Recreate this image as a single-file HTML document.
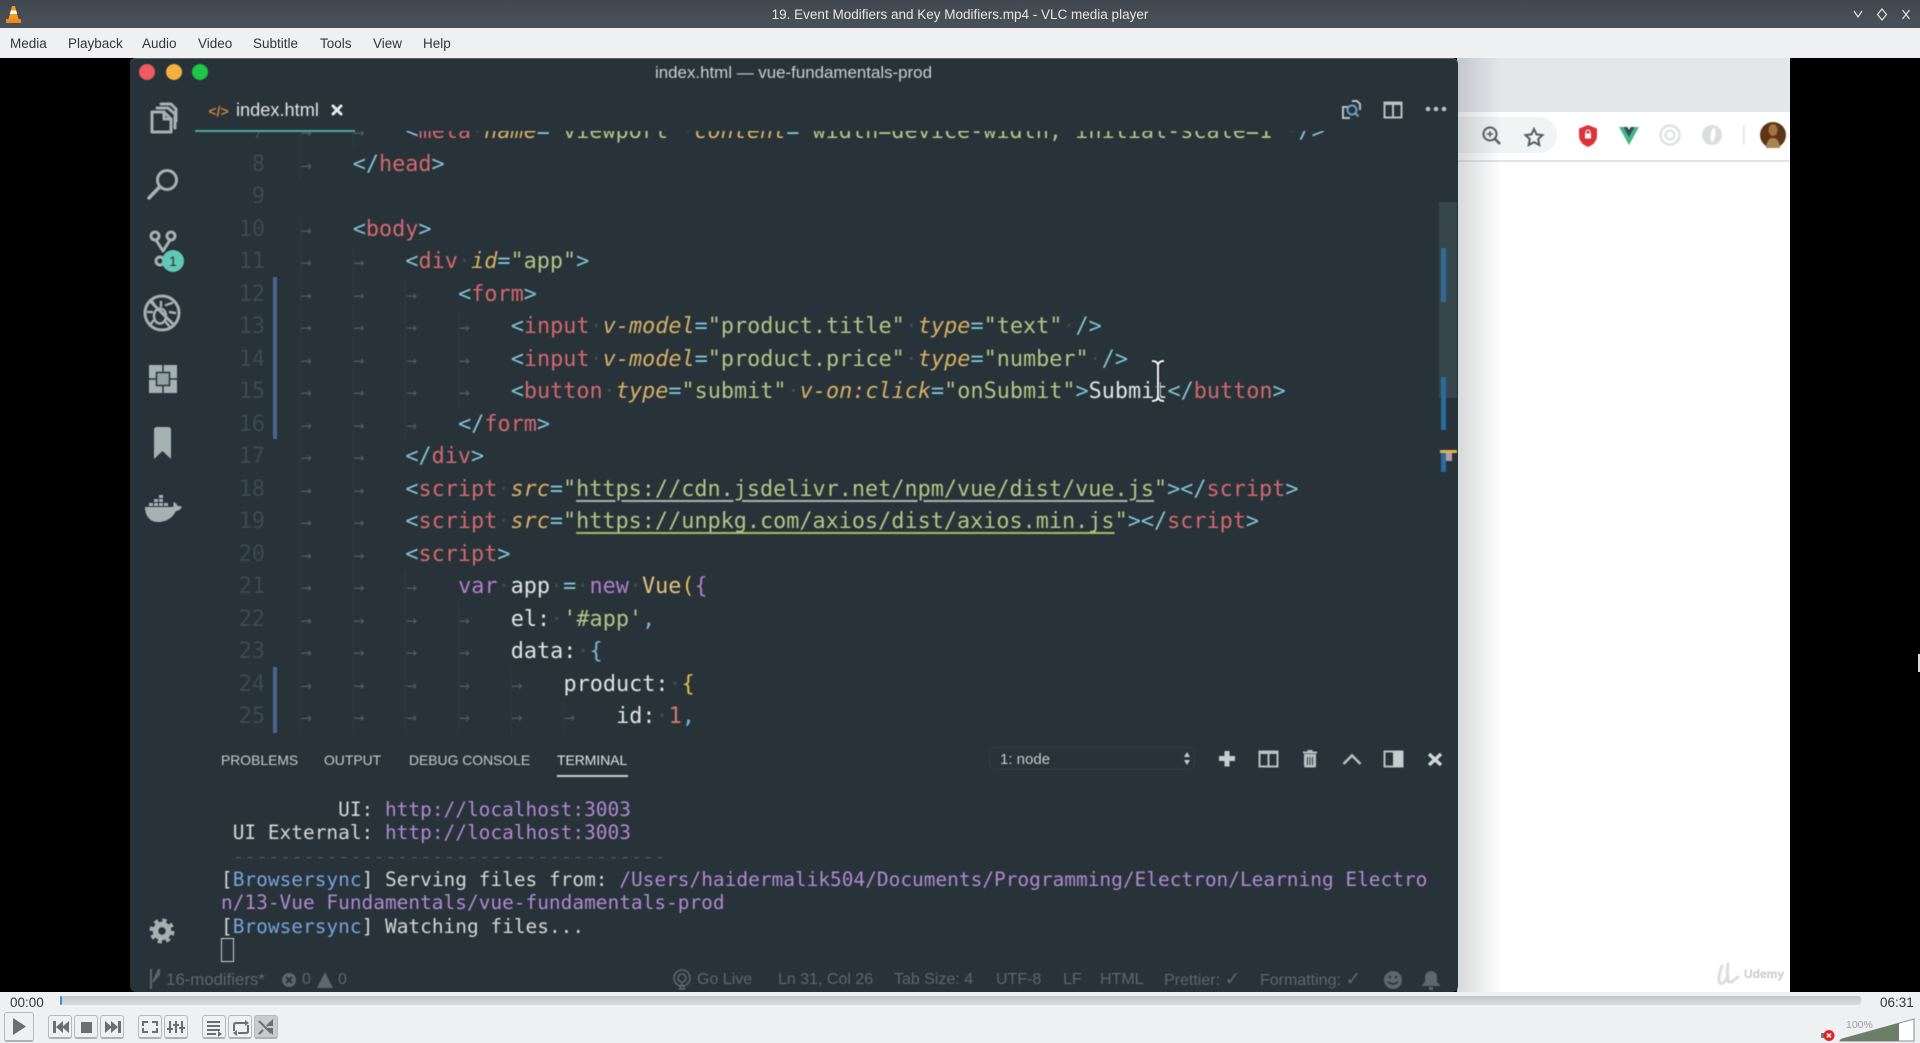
<!DOCTYPE html>
<html lang="en"><head><meta charset="utf-8"><title>19. Event Modifiers and Key Modifiers.mp4 - VLC media player</title>
<style>
html,body{margin:0;padding:0;width:1920px;height:1043px;overflow:hidden;background:#eff0f1;font-family:"Liberation Sans",sans-serif}
.a{position:absolute}
#title{left:0;top:0;width:1920px;height:28px;background:linear-gradient(#41474f,#4a5159);color:#e4e6e8;font-size:13.5px;line-height:29px;text-align:center}
#menu{left:0;top:28px;width:1920px;height:30px;background:#eff0f1;color:#31363b;font-size:13.5px}
#menu span{position:absolute;top:1px;line-height:30px}
#video{left:0;top:58px;width:1920px;height:934px;background:#000;overflow:hidden}
#browser{left:1457px;top:0;width:333px;height:934px;background:#fff}
#vs{left:130px;top:0;width:1328px;height:934px;background:#273339;border-radius:6px;filter:blur(.35px);box-shadow:inset 0 1px #56636a}
.code{position:absolute;left:300px;height:32.5px;line-height:32.5px;white-space:pre;font-family:"DejaVu Sans Mono","Liberation Mono",monospace;font-size:21.82px;color:#dfe4e6}
.n{position:absolute;left:217px;width:48px;height:32.5px;line-height:32.5px;text-align:right;font-family:"DejaVu Sans Mono",monospace;font-size:21.82px;color:#3c4a51}
i{font-style:normal}
.code i.t{display:inline-block;width:51.7px;border-left:1px solid #2f3c43;height:32.5px;vertical-align:top;font-size:18px;line-height:33px;color:#4f5c62;text-indent:0}
.b{color:#83c3d2}.r{color:#d4686f}.y{font-style:italic;color:#d8b066}.s{color:#b3c586}.d{color:#3f4c53}.w{color:#e2e6e8}
.p{color:#b07fc9}.v{color:#e3c27c}.q{color:#d97b68}.c{color:#e0c050}.l{color:#7fb2d8}
.u1{text-decoration:underline;text-decoration-color:#a8b5ad;text-underline-offset:4px;text-decoration-thickness:2px}
.u2{text-decoration:underline;text-decoration-color:#a3bf5e;text-underline-offset:4px;text-decoration-thickness:2px}
.term{position:absolute;left:221px;margin-top:.5px;height:23.4px;line-height:23.4px;white-space:pre;font-family:"DejaVu Sans Mono",monospace;font-size:19.47px;color:#d3d8da}
.term b{font-weight:normal;color:#b08ad0}.term em{font-style:normal;color:#7aa2dd}
.pt{position:absolute;font-size:13.9px;line-height:20px;color:#c4cdd0}
.st{position:absolute;font-size:16px;line-height:20px;color:#5b686e;white-space:pre}
.st i{font-size:19px}
.btn{position:absolute;box-sizing:border-box;border:1px solid #b7b9ba;border-bottom:2px solid #aeb0b1;border-radius:3px;background:#eff0f1}
</style></head><body>

<div class="a" id="title">19. Event Modifiers and Key Modifiers.mp4 - VLC media player</div>
<div class="a" id="menu">
<span style="left:10px">Media</span><span style="left:68px">Playback</span><span style="left:142px">Audio</span><span style="left:198px">Video</span><span style="left:253px">Subtitle</span><span style="left:320px">Tools</span><span style="left:373px">View</span><span style="left:423px">Help</span>
</div>

<div class="a" id="video">
 <div class="a" style="left:1918px;top:596px;width:2px;height:18px;background:#ddd"></div>
 <div class="a" id="browser">
  <div class="a" style="left:0;top:0;width:333px;height:54px;background:#e4e7ea"></div>
  <div class="a" style="left:0;top:54px;width:333px;height:48px;background:#fff"></div>
  <div class="a" style="left:0;top:59px;width:100px;height:36px;background:#f1f3f4;border-radius:0 18px 18px 0"></div>
  <div class="a" style="left:0;top:102px;width:333px;height:2px;background:#e3e4e6"></div>
  <div class="a" style="left:0;top:0;width:45px;height:934px;background:linear-gradient(90deg,rgba(120,125,130,.3),rgba(255,255,255,0))"></div>
  <div class="a" style="left:259px;top:905px;width:68px;font-size:12px;font-weight:bold;color:#d6d8da;text-align:right;line-height:22px;text-shadow:0 0 1px #bbb">Udemy</div>
 </div>
 <div class="a" id="vs"></div>
</div>

<!-- code area -->
<div class="a" style="left:0;top:0;width:1920px;height:1043px;filter:blur(.45px)">
<div class="a" style="left:1439px;top:202px;width:18px;height:196px;background:#37464d"></div>
<div class="a" style="left:1441px;top:248px;width:5px;height:54px;background:#2f6b97"></div>
<div class="a" style="left:1441px;top:377px;width:5px;height:53px;background:#2a6c9c"></div>
<div class="a" style="left:1441px;top:450px;width:5px;height:22px;background:#2a6c9c"></div>
<div class="a" style="left:1440px;top:450px;width:17px;height:3px;background:#d9b54a"></div>
<div class="a" style="left:1446px;top:453px;width:6px;height:8px;background:#b99aa8"></div>

<div class="a" style="left:273px;top:277px;width:4px;height:162px;background:#4d648f"></div>
<div class="a" style="left:273px;top:667px;width:4px;height:66px;background:#4d648f"></div>

<div class="a" style="left:0;top:131px;width:1439px;height:604px;overflow:hidden">
 <div style="position:absolute;left:0;top:-130px;width:1439px;height:900px">
<div class="n" style="top:115.25px">7</div>
<div class="code" style="top:115.25px"><i class="t">→</i><i class="t">→</i><span class="b">&lt;</span><span class="r">meta</span><span class="d">·</span><span class="y">name</span><span class="b">=</span><span class="s">"viewport"</span><span class="d">·</span><span class="y">content</span><span class="b">=</span><span class="s">"width=device-width, initial-scale=1"</span><span class="d">·</span><span class="b">/&gt;</span></div>
<div class="n" style="top:147.75px">8</div>
<div class="code" style="top:147.75px"><i class="t">→</i><span class="b">&lt;/</span><span class="r">head</span><span class="b">&gt;</span></div>
<div class="n" style="top:180.25px">9</div>
<div class="n" style="top:212.75px">10</div>
<div class="code" style="top:212.75px"><i class="t">→</i><span class="b">&lt;</span><span class="r">body</span><span class="b">&gt;</span></div>
<div class="n" style="top:245.25px">11</div>
<div class="code" style="top:245.25px"><i class="t">→</i><i class="t">→</i><span class="b">&lt;</span><span class="r">div</span><span class="d">·</span><span class="y">id</span><span class="b">=</span><span class="s">"app"</span><span class="b">&gt;</span></div>
<div class="n" style="top:277.75px">12</div>
<div class="code" style="top:277.75px"><i class="t">→</i><i class="t">→</i><i class="t">→</i><span class="b">&lt;</span><span class="r">form</span><span class="b">&gt;</span></div>
<div class="n" style="top:310.25px">13</div>
<div class="code" style="top:310.25px"><i class="t">→</i><i class="t">→</i><i class="t">→</i><i class="t">→</i><span class="b">&lt;</span><span class="r">input</span><span class="d">·</span><span class="y">v-model</span><span class="b">=</span><span class="s">"product.title"</span><span class="d">·</span><span class="y">type</span><span class="b">=</span><span class="s">"text"</span><span class="d">·</span><span class="b">/&gt;</span></div>
<div class="n" style="top:342.75px">14</div>
<div class="code" style="top:342.75px"><i class="t">→</i><i class="t">→</i><i class="t">→</i><i class="t">→</i><span class="b">&lt;</span><span class="r">input</span><span class="d">·</span><span class="y">v-model</span><span class="b">=</span><span class="s">"product.price"</span><span class="d">·</span><span class="y">type</span><span class="b">=</span><span class="s">"number"</span><span class="d">·</span><span class="b">/&gt;</span></div>
<div class="n" style="top:375.25px">15</div>
<div class="code" style="top:375.25px"><i class="t">→</i><i class="t">→</i><i class="t">→</i><i class="t">→</i><span class="b">&lt;</span><span class="r">button</span><span class="d">·</span><span class="y">type</span><span class="b">=</span><span class="s">"submit"</span><span class="d">·</span><span class="y">v-on:click</span><span class="b">=</span><span class="s">"onSubmit"</span><span class="b">&gt;</span><span class="w">Submit</span><span class="b">&lt;/</span><span class="r">button</span><span class="b">&gt;</span></div>
<div class="n" style="top:407.75px">16</div>
<div class="code" style="top:407.75px"><i class="t">→</i><i class="t">→</i><i class="t">→</i><span class="b">&lt;/</span><span class="r">form</span><span class="b">&gt;</span></div>
<div class="n" style="top:440.25px">17</div>
<div class="code" style="top:440.25px"><i class="t">→</i><i class="t">→</i><span class="b">&lt;/</span><span class="r">div</span><span class="b">&gt;</span></div>
<div class="n" style="top:472.75px">18</div>
<div class="code" style="top:472.75px"><i class="t">→</i><i class="t">→</i><span class="b">&lt;</span><span class="r">script</span><span class="d">·</span><span class="y">src</span><span class="b">=</span><span class="s">"<span class="u1">https://cdn.jsdelivr.net/npm/vue/dist/vue.js</span>"</span><span class="b">&gt;&lt;/</span><span class="r">script</span><span class="b">&gt;</span></div>
<div class="n" style="top:505.25px">19</div>
<div class="code" style="top:505.25px"><i class="t">→</i><i class="t">→</i><span class="b">&lt;</span><span class="r">script</span><span class="d">·</span><span class="y">src</span><span class="b">=</span><span class="s">"<span class="u2">https://unpkg.com/axios/dist/axios.min.js</span>"</span><span class="b">&gt;&lt;/</span><span class="r">script</span><span class="b">&gt;</span></div>
<div class="n" style="top:537.75px">20</div>
<div class="code" style="top:537.75px"><i class="t">→</i><i class="t">→</i><span class="b">&lt;</span><span class="r">script</span><span class="b">&gt;</span></div>
<div class="n" style="top:570.25px">21</div>
<div class="code" style="top:570.25px"><i class="t">→</i><i class="t">→</i><i class="t">→</i><span class="p">var</span><span class="d">·</span>app<span class="d">·</span><span class="b">=</span><span class="d">·</span><span class="p">new</span><span class="d">·</span><span class="v">Vue</span><span class="c">(</span><span class="p">{</span></div>
<div class="n" style="top:602.75px">22</div>
<div class="code" style="top:602.75px"><i class="t">→</i><i class="t">→</i><i class="t">→</i><i class="t">→</i>el:<span class="d">·</span><span class="s">'#app'</span><span class="l">,</span></div>
<div class="n" style="top:635.25px">23</div>
<div class="code" style="top:635.25px"><i class="t">→</i><i class="t">→</i><i class="t">→</i><i class="t">→</i>data:<span class="d">·</span><span class="l">{</span></div>
<div class="n" style="top:667.75px">24</div>
<div class="code" style="top:667.75px"><i class="t">→</i><i class="t">→</i><i class="t">→</i><i class="t">→</i><i class="t">→</i>product:<span class="d">·</span><span class="c">{</span></div>
<div class="n" style="top:700.25px">25</div>
<div class="code" style="top:700.25px"><i class="t">→</i><i class="t">→</i><i class="t">→</i><i class="t">→</i><i class="t">→</i><i class="t">→</i>id:<span class="d">·</span><span class="q">1</span><span class="l">,</span></div>
 </div>
</div>

<div class="a" style="left:530px;top:63px;width:527px;text-align:center;font-size:16.9px;line-height:20px;color:#c9d0d3">index.html — vue-fundamentals-prod</div>
<div class="a" style="left:236px;top:100px;font-size:18.2px;line-height:20px;color:#dfe4e6">index.html</div>
<div class="a" style="left:195px;top:130px;width:160px;height:2px;background:#4da99b"></div>

<div class="pt" style="top:750px;left:221px">PROBLEMS</div>
<div class="pt" style="top:750px;left:324px">OUTPUT</div>
<div class="pt" style="top:750px;left:409px">DEBUG CONSOLE</div>
<div class="pt" style="top:750px;left:557px;color:#e2e6e8">TERMINAL</div>
<div class="a" style="left:557px;top:775px;width:71px;height:2px;background:#c8d0d3"></div>
<div class="a" style="left:989px;top:747px;width:206px;height:23px;box-sizing:border-box;border:1px solid #303e45;border-radius:6px"></div>
<div class="a" style="left:1000px;top:750px;font-size:15px;line-height:20px;color:#c4cdd0">1: node</div>

<div class="term" style="top:797.3px">          UI: <b>http://localhost:3003</b></div>
<div class="term" style="top:820.7px"> UI External: <b>http://localhost:3003</b></div>
<div class="term" style="top:844.1px;color:#44535a"> -------------------------------------</div>
<div class="term" style="top:867.5px">[<em>Browsersync</em>] Serving files from: <b>/Users/haidermalik504/Documents/Programming/Electron/Learning Electro</b></div>
<div class="term" style="top:890.9px"><b>n/13-Vue Fundamentals/vue-fundamentals-prod</b></div>
<div class="term" style="top:914.3px">[<em>Browsersync</em>] Watching files...</div>
<div class="a" style="left:221px;top:938px;width:11px;height:22px;border:1.5px solid #c9d0d3"></div>

<div class="st" style="top:970px;left:166px;font-size:16.8px">16-modifiers*</div>
<div class="st" style="top:970px;left:302px">0</div>
<div class="st" style="top:970px;left:338px">0</div>
<div class="st" style="top:970px;left:697px">Go Live</div>
<div class="st" style="top:970px;left:778px">Ln 31, Col 26</div>
<div class="st" style="top:970px;left:894px">Tab Size: 4</div>
<div class="st" style="top:970px;left:996px">UTF-8</div>
<div class="st" style="top:970px;left:1063px">LF</div>
<div class="st" style="top:970px;left:1100px">HTML</div>
<div class="st" style="top:970px;left:1164px">Prettier: <i>✓</i></div>
<div class="st" style="top:970px;left:1260px">Formatting: <i>✓</i></div>
</div>

<!-- icons overlay -->
<svg class="a" style="left:0;top:0;filter:blur(.4px)" width="1920" height="1043" viewBox="0 0 1920 1043">
 <g fill="none" stroke="#a5b2b4" stroke-width="3" stroke-linejoin="round" stroke-linecap="round">
  <path d="M152 112h12l7 7v13h-19z"/><path d="M164 112v7h7"/>
  <path d="M157 108h11l7 6v14"/><path d="M161 104h10l5 5v12"/>
  <circle cx="167" cy="180" r="9.5" stroke-width="3"/><path d="M159.5 187L149 198" stroke-width="3.6"/>
  <circle cx="155" cy="236" r="4"/><circle cx="171" cy="236" r="4"/>
  <path d="M156 240l7 11M170 240l-7 11"/><circle cx="160" cy="261" r="4"/>
  <circle cx="162" cy="313" r="17" stroke-width="3"/>
  <path d="M150 301l24 24" stroke-width="3"/>
  <ellipse cx="160" cy="316" rx="6" ry="7.5" stroke-width="2.5"/>
  <path d="M166 305l6 -2M170 312l5 1M165 321l4 5M153 321l-3 4M152 312h-4M154 304l-3 -4M161 302v4" stroke-width="2.5"/>
 </g>
 <circle cx="173" cy="261" r="11" fill="#62c8b6"/>
 <text x="173" y="266" font-family="Liberation Sans" font-size="14" text-anchor="middle" fill="#24343a">1</text>
 <rect x="149" y="365" width="28" height="28" fill="#a5b2b4"/>
 <rect x="156.5" y="372.500" width="13" height="13" fill="#94a2a4" stroke="#27333a" stroke-width="1.500"/>
 <path d="M163 365v7M170 379h7M163 386v7M149 379h7" stroke="#27333a" stroke-width="1.500"/>
 <path d="M154 430q0-3 3-3h11q3 0 3 3v29l-8.500-8-8.500 8z" fill="#a5b2b4"/>
 <path d="M145 507h28c1-2 0-4 1-5 2 1 3 3 4 4 1 0 3 0 4 1-2 3-4 4-6 4-4 8-11 11-18 11-8 0-13-6-13-15z" fill="#a5b2b4"/>
 <path d="M149 503h4v3h-4zM154 503h4v3h-4zM159 503h4v3h-4zM164 503h4v3h-4zM154 499h4v3h-4zM159 499h4v3h-4zM159 495h4v3h-4z" fill="#a5b2b4"/>
 <circle cx="162" cy="931" r="6.500" fill="none" stroke="#a5b2b4" stroke-width="5.500"/>
 <circle cx="162" cy="931" r="10.500" fill="none" stroke="#a5b2b4" stroke-width="4" stroke-dasharray="4.100 4.150"/>

 <text x="218.500" y="116" font-family="Liberation Sans" font-weight="bold" font-size="14" text-anchor="middle" fill="#c8813f">&lt;/&gt;</text>
 <path d="M333 106l8 8M341 106l-8 8" stroke="#e6eaec" stroke-width="3" stroke-linecap="round"/>

 <circle cx="147" cy="72" r="8" fill="#ee5b60"/><circle cx="174" cy="72" r="8" fill="#f5b13f"/><circle cx="200" cy="72" r="8" fill="#1fc544"/>

 <g fill="none" stroke="#b6c1c4" stroke-width="2">
  <path d="M1349 107h-6v11h7M1352 101h5l3 3v6"/>
  <rect x="1384.500" y="102.500" width="17" height="15"/><path d="M1393 103v14"/><path d="M1384 103.500h18" stroke-width="3"/>
  <rect x="1259.500" y="751.500" width="18" height="15"/><path d="M1268.500 752v15"/><path d="M1259 752.500h19" stroke-width="3"/>
  <rect x="1384.500" y="751.500" width="18" height="15"/>
  <path d="M1343.500 764l8.500-8.500 8.500 8.500" stroke-width="2.600"/>
 </g>
 <circle cx="1352" cy="110" r="4.500" fill="none" stroke="#6d9fc6" stroke-width="2"/><path d="M1355.500 113.500l3 3" stroke="#6d9fc6" stroke-width="2"/>
 <circle cx="1428" cy="109" r="2.300" fill="#b6c1c4"/><circle cx="1436" cy="109" r="2.300" fill="#b6c1c4"/><circle cx="1444" cy="109" r="2.300" fill="#b6c1c4"/>
 <path d="M1187 752l-3 5h6zM1187 765l-3-5h6z" fill="#c4cdd0"/>
 <path d="M1227 751v15.500M1219 758.500h16" stroke="#c4cdd0" stroke-width="5"/>
 <rect x="1393" y="751" width="10" height="16" fill="#c4cdd0"/>
 <path d="M1304 754h12v12q0 1.500-1.500 1.500h-9q-1.500 0-1.500-1.500z" fill="#b6c1c4"/><path d="M1303 752.500h14M1307.500 751h5" stroke="#b6c1c4" stroke-width="2"/>
 <path d="M1307.500 757v8M1310 757v8M1312.500 757v8" stroke="#27333a" stroke-width="1"/>
 <path d="M1429 754l12 11M1441 754l-12 11" stroke="#d2d8da" stroke-width="3.500"/>

 <g fill="#5b686e">
  <path d="M150 969h2v20h-2zM158 969h2v6l-6 7h-2z"/>
  <circle cx="289" cy="980" r="7"/>
  <path d="M325 972l8 16h-16z"/>
  <circle cx="1393" cy="980" r="9"/>
  <path d="M1431 971c-4 0-6 3-6 6v5l-3 3v1h18v-1l-3-3v-5c0-3-2-6-6-6zM1429 987h4v3h-4z"/>
 </g>
 <path d="M286 977l6 6M292 977l-6 6" stroke="#27333a" stroke-width="2"/>
 <circle cx="1390" cy="977" r="1.300" fill="#27333a"/><circle cx="1396" cy="977" r="1.300" fill="#27333a"/><path d="M1388 982q5 4 10 0" stroke="#27333a" stroke-width="1.500" fill="none"/>
 <g fill="none" stroke="#5b686e" stroke-width="1.600">
  <circle cx="682" cy="978" r="8"/><circle cx="682" cy="978" r="4"/><path d="M682 984l-2.500 5h5z"/>
 </g>

 <!-- browser icons -->
 <g fill="none" stroke="#555b60" stroke-width="2">
  <circle cx="1490" cy="134" r="6.500"/><path d="M1495 139l5 5" stroke-width="2.500"/><path d="M1487 134h6M1490 131v6" stroke-width="1.500"/>
  <path d="M1534 129l2.600 5.400 5.900 .7-4.300 4 1.100 5.900-5.300-2.900-5.300 2.900 1.100-5.900-4.300-4 5.900-.7z"/>
 </g>
 <path d="M1588 125l9 3.500v7c0 6-4 9.500-9 11.500-5-2-9-5.500-9-11.500v-7z" fill="#d8343a"/>
 <rect x="1585" y="133.500" width="6" height="5" fill="#fff"/><path d="M1586 134v-2a2 2 0 014 0v2" stroke="#fff" fill="none"/>
 <path d="M1619 127h6l4 7 4-7h6l-10 18z" fill="#42b883"/><path d="M1623.500 127h4l1.500 3 1.500-3h4l-5.500 10z" fill="#35495e"/>
 <circle cx="1670" cy="135" r="9.500" fill="none" stroke="#dfe1e2" stroke-width="2.500"/><circle cx="1670" cy="135" r="4.500" fill="none" stroke="#dcdedf" stroke-width="2"/>
 <circle cx="1712" cy="135" r="10" fill="#dcddde"/><path d="M1714 127q-6 8-2 16 6-8 2-16z" fill="#fff"/>
 <rect x="1743" y="125" width="1.500" height="20" fill="#dfdfe0"/>
 <circle cx="1773" cy="135" r="13" fill="#5e3518"/><ellipse cx="1773" cy="130" rx="4.500" ry="6" fill="#a8743e"/><path d="M1766 148q1-10 7-10t7 10z" fill="#a98554"/>
 <path d="M1722 966c-3 8-4 14-2 17 3 2 6-2 8-8M1728 964c-1 8-1 14 1 18 3 1 6-3 9-5" fill="none" stroke="#dadcde" stroke-width="3" stroke-linecap="round"/>

 <!-- I-beam cursor -->
 <path d="M1152 361q6 0 6 5v30q0 5-6 5M1164 361q-6 0-6 5v30q0 5 6 5" fill="none" stroke="#1b2328" stroke-width="4"/>
 <path d="M1152 361q6 0 6 5v30q0 5-6 5M1164 361q-6 0-6 5v30q0 5 6 5" fill="none" stroke="#f4f6f6" stroke-width="2"/>
</svg>

<!-- VLC controls -->
<div class="a" style="left:0;top:992px;width:1920px;height:51px;background:#eff0f1"></div>
<div class="a" style="left:10px;top:995.500px;font-size:13.5px;line-height:14px;color:#31363b">00:00</div>
<div class="a" style="left:1880px;top:995.500px;font-size:13.5px;line-height:14px;color:#31363b">06:31</div>
<div class="a" style="left:60px;top:996px;width:1801px;height:9px;background:linear-gradient(#c3c5c6,#dcddde);border-radius:3px"></div>
<div class="a" style="left:60px;top:996px;width:2px;height:9px;background:#3b8fd6;border-radius:2px"></div>

<div class="btn" style="left:4px;top:1012px;width:30px;height:30px"></div>
<div class="btn" style="left:48px;top:1015px;width:24px;height:24px"></div>
<div class="btn" style="left:74px;top:1015px;width:24px;height:24px"></div>
<div class="btn" style="left:100px;top:1015px;width:24px;height:24px"></div>
<div class="btn" style="left:138px;top:1015px;width:24px;height:24px"></div>
<div class="btn" style="left:164px;top:1015px;width:24px;height:24px"></div>
<div class="btn" style="left:202px;top:1015px;width:24px;height:24px"></div>
<div class="btn" style="left:228px;top:1015px;width:24px;height:24px"></div>
<div class="btn" style="left:254px;top:1015px;width:24px;height:24px;background:#c9cacb"></div>

<svg class="a" style="left:0;top:0" width="1920" height="1043" viewBox="0 0 1920 1043">
 <path d="M1854 11l4 6 4-6M1882 9l4.500 5.500-4.500 5.500-4.500-5.500zM1902.500 10l7 9M1909.500 10l-7 9" fill="none" stroke="#dfe2e4" stroke-width="1.200"/>
 <path d="M12 6l3 0 3.500 13h-10z" fill="#f39a1d"/><path d="M10.800 10.500h5.400l.9 3.500h-7.200z" fill="#fff"/><rect x="6" y="19" width="15" height="4" rx="1" fill="#ee8a1a"/>
 <g fill="#6c6e70">
  <path d="M13 1018l13 8.500-13 8.500z"/>
  <path d="M53 1021h3v12h-3zM56 1027l7-6v12zM62 1027l7-6v12z"/>
  <rect x="81" y="1022" width="11" height="11"/>
  <path d="M105 1021l7 6-7 6zM111 1021l7 6-7 6zM118 1021h3v12h-3z"/>
  <path d="M142 1021h6v2h-4v3h-2zM158 1021v5h-2v-3h-4v-2zM142 1033v-5h2v3h4v2zM158 1033h-6v-2h4v-3h2z"/>
  <path d="M169 1021h2v12h-2zM175 1021h2v12h-2zM181 1021h2v12h-2zM167 1028h6v2h-6zM173 1024h6v2h-6zM179 1027h6v2h-6z"/>
  <path d="M207 1021h13v2h-13zM207 1025h13v2h-13zM207 1029h13v2h-13zM207 1033h9v2h-9zM218 1031l4 3-4 3z"/>
 </g>
 <path d="M234 1031v-6q0-2 2-2h11M246 1033h-8M246 1033q2 0 2-2v-6" fill="none" stroke="#6c6e70" stroke-width="2"/>
 <path d="M245 1020l4 3-4 3zM237 1030l-4 3 4 3z" fill="#6c6e70"/>
 <path d="M259 1021l12 12M259 1034l4-4M267 1026l4-4" fill="none" stroke="#6c6e70" stroke-width="2"/>
 <path d="M273 1019v7h-7zM273 1035v-7h-7z" fill="#6c6e70"/>
 <path d="M1821 1033h3l4-3v11l-4-3h-3z" fill="#74787c"/>
 <circle cx="1829" cy="1035.500" r="5.500" fill="#e22226"/><path d="M1827 1033.500l4 4M1831 1033.500l-4 4" stroke="#fff" stroke-width="1.500"/>
 <path d="M1840 1041q0-1 2-2l72-20v22z" fill="#fff" stroke="#8a8c8e" stroke-width="1"/>
 <path d="M1840 1041q0-1 2-2l57-16v18z" fill="#6b7e68"/>
 <text x="1846" y="1028" font-family="Liberation Sans" font-size="10.500" fill="#9ca0a4">100%</text>
</svg>
</body></html>
